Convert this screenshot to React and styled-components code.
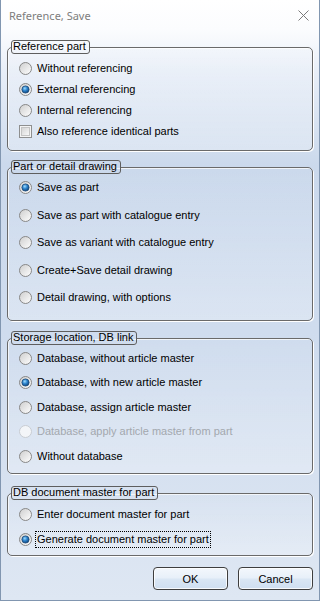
import React from "react";
import styled, { createGlobalStyle } from "styled-components";

const GlobalStyle = createGlobalStyle`
  html, body { margin: 0; padding: 0; background: #dfe8f3; }
  body { font-family: "Liberation Sans", Arial, sans-serif; font-size: 11px; color: #000; }
`;

const Window = styled.div`
  width: 320px;
  height: 601px;
  box-sizing: border-box;
  border: 1px solid #8196b0;
  border-top: none;
  background: linear-gradient(
    180deg,
    #ffffff 0px,
    #fbfcfe 30px,
    #e9eff8 70px,
    #cbd9ec 165px,
    #cfdcee 330px,
    #d6e1f0 470px,
    #dee7f3 600px
  );
  display: flex;
  flex-direction: column;
`;

const TitleBar = styled.div`
  height: 40px;
  flex: none;
  display: flex;
  justify-content: space-between;
  align-items: flex-start;
`;

const Title = styled.div`
  font-family: "Noto Sans", "Open Sans", sans-serif;
  font-size: 11px;
  line-height: 16px;
  color: #7d7d7d;
  padding: 8px 0 0 8px;
`;

const Close = styled.svg`
  margin: 10px 10px 0 0;
  flex: none;
`;

const Content = styled.div`
  display: flex;
  flex-direction: column;
  padding: 0 6px;
`;

const Group = styled.fieldset`
  margin: ${(p) => p.$top}px 0 0 0;
  padding: 0;
  min-width: 0;
  border: 1px solid #6a6a6a;
  border-radius: 5px;
  box-shadow: 1px 1px 0 #ffffff, inset 1px 1px 0 rgba(255, 255, 255, 0.7);
  background: linear-gradient(180deg, rgba(255, 255, 255, 0) 0%, rgba(255, 255, 255, 0.25) 100%);
`;

const Legend = styled.legend`
  margin-left: 3px;
  padding: 0 3px 0 1px;
  height: 14px;
  box-sizing: border-box;
  border: 1px solid #5e5e5e;
  border-radius: 3px;
  line-height: 11px;
  font-size: 11px;
  color: #000;
  background: transparent;
`;

const OptionList = styled.div`
  display: flex;
  flex-direction: column;
  padding: ${(p) => p.$pt}px 0 ${(p) => p.$pb}px 11px;
`;

const OptionRow = styled.div`
  height: ${(p) => p.$h}px;
  display: flex;
  align-items: center;
  gap: 4px;
  color: ${(p) => (p.$disabled ? "#a3a8ae" : "#000")};
`;

const OptionLabel = styled.span`
  line-height: 15px;
  white-space: nowrap;
  padding: 0 1px;
  margin-left: -1px;
  border: 1px dotted ${(p) => (p.$focus ? "#000" : "transparent")};
`;

const ButtonRow = styled.div`
  display: flex;
  justify-content: flex-end;
  gap: 10px;
  margin-top: 11px;
`;

const Button = styled.button`
  width: 75px;
  height: 23px;
  box-sizing: border-box;
  border: 1px solid #3e3e3e;
  border-radius: 4px;
  font-family: "Liberation Sans", Arial, sans-serif;
  font-size: 11px;
  color: #000;
  padding: 0;
  box-shadow: inset 0 0 0 1px rgba(255, 255, 255, 0.8);
  background: linear-gradient(180deg, #f3f7fc 0%, #e8f0f9 45%, #d9e6f4 55%, #cfdff1 100%);
`;

function RadioIcon({ checked, disabled }) {
  return (
    <svg width="13" height="13" viewBox="0 0 13 13" style={{ flex: "none" }}>
      <defs>
        <linearGradient id="rfill" x1="0" y1="0" x2="1" y2="1">
          <stop offset="0" stopColor="#cdcdcd" />
          <stop offset="1" stopColor="#ffffff" />
        </linearGradient>
        <radialGradient id="rdot" cx="0.4" cy="0.35" r="0.7">
          <stop offset="0" stopColor="#9fdcff" />
          <stop offset="0.45" stopColor="#2f86cf" />
          <stop offset="1" stopColor="#0c3d73" />
        </radialGradient>
      </defs>
      <circle
        cx="6.5"
        cy="6.5"
        r="6"
        fill={disabled ? "#f3f5f8" : "url(#rfill)"}
        stroke={disabled ? "#c8ccd2" : "#878787"}
        strokeWidth="1"
      />
      {checked && <circle cx="6.5" cy="6.5" r="3.6" fill="url(#rdot)" stroke="#1d4a78" strokeWidth="0.8" />}
    </svg>
  );
}

function CheckIcon() {
  return (
    <svg width="13" height="13" viewBox="0 0 13 13" style={{ flex: "none" }}>
      <defs>
        <linearGradient id="cfill" x1="0" y1="0" x2="1" y2="1">
          <stop offset="0" stopColor="#d3d3d3" />
          <stop offset="1" stopColor="#fafafa" />
        </linearGradient>
      </defs>
      <rect x="0.5" y="0.5" width="12" height="12" fill="#f4f4f4" stroke="#8e8f8f" />
      <rect x="2.5" y="2.5" width="8" height="8" fill="url(#cfill)" stroke="#c4c4c4" />
    </svg>
  );
}

const groups = [
  {
    title: "Reference part",
    top: 0,
    h: 21,
    pt: 4,
    pb: 8,
    items: [
      { label: "Without referencing" },
      { label: "External referencing", checked: true },
      { label: "Internal referencing" },
      { label: "Also reference identical parts", checkbox: true },
    ],
  },
  {
    title: "Part or detail drawing",
    top: 9,
    h: 27.5,
    pt: 0,
    pb: 8.5,
    items: [
      { label: "Save as part", checked: true },
      { label: "Save as part with catalogue entry" },
      { label: "Save as variant with catalogue entry" },
      { label: "Create+Save detail drawing" },
      { label: "Detail drawing, with options" },
    ],
  },
  {
    title: "Storage location, DB link",
    top: 10,
    h: 24.5,
    pt: 1,
    pb: 4.5,
    items: [
      { label: "Database, without article master" },
      { label: "Database, with new article master", checked: true },
      { label: "Database, assign article master" },
      { label: "Database, apply article master from part", disabled: true },
      { label: "Without database" },
    ],
  },
  {
    title: "DB document master for part",
    top: 12,
    h: 25,
    pt: 1.5,
    pb: 3.5,
    items: [
      { label: "Enter document master for part" },
      { label: "Generate document master for part", checked: true, focus: true },
    ],
  },
];

export default function App() {
  return (
    <>
      <GlobalStyle />
      <Window>
        <TitleBar>
          <Title>Reference, Save</Title>
          <Close width="11" height="11" viewBox="0 0 11 11">
            <path d="M0.5 0.5 L10.5 10.5 M10.5 0.5 L0.5 10.5" stroke="#7a7a7a" strokeWidth="1" fill="none" />
          </Close>
        </TitleBar>
        <Content>
          {groups.map((g) => (
            <Group key={g.title} $top={g.top}>
              <Legend>{g.title}</Legend>
              <OptionList $pt={g.pt} $pb={g.pb}>
                {g.items.map((it) => (
                  <OptionRow key={it.label} $h={g.h} $disabled={it.disabled}>
                    {it.checkbox ? <CheckIcon /> : <RadioIcon checked={it.checked} disabled={it.disabled} />}
                    <OptionLabel $focus={it.focus}>{it.label}</OptionLabel>
                  </OptionRow>
                ))}
              </OptionList>
            </Group>
          ))}
          <ButtonRow>
            <Button>OK</Button>
            <Button>Cancel</Button>
          </ButtonRow>
        </Content>
      </Window>
    </>
  );
}
